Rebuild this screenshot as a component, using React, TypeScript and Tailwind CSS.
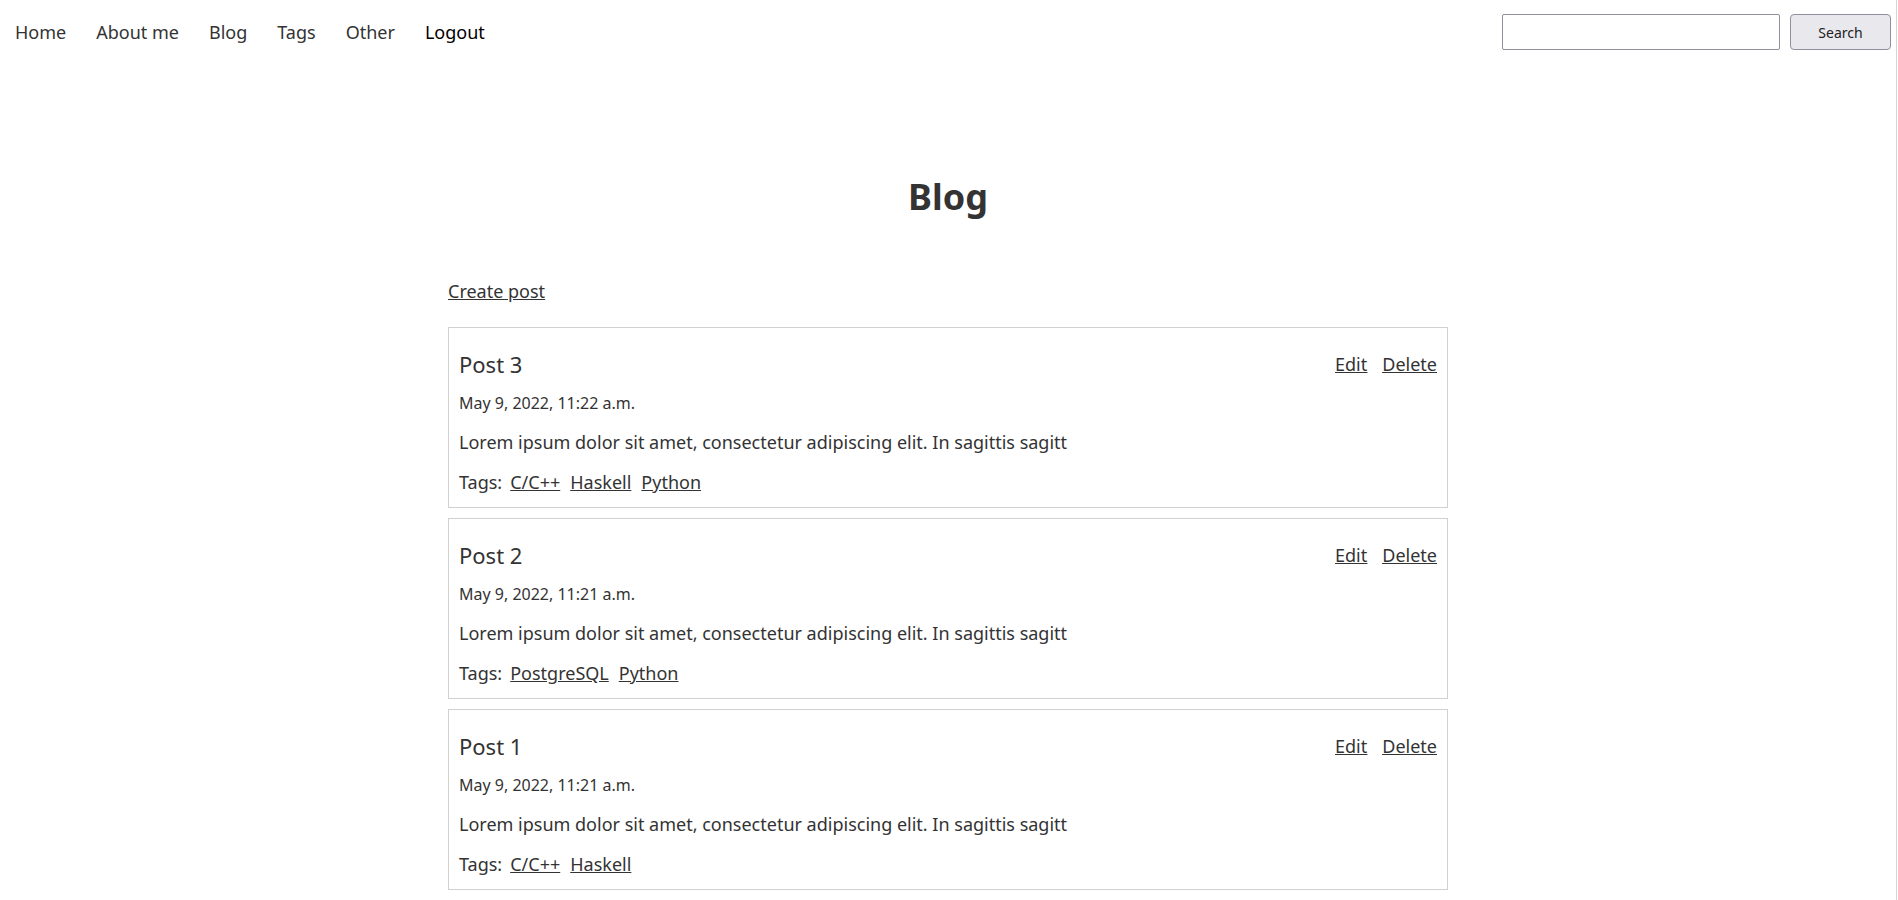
import React from "react";

type Post = {
  id: number;
  title: string;
  date: string;
  body: string;
  tags: string[];
};

const posts: Post[] = [
  {
    id: 3,
    title: "Post 3",
    date: "May 9, 2022, 11:22 a.m.",
    body: "Lorem ipsum dolor sit amet, consectetur adipiscing elit. In sagittis sagitt",
    tags: ["C/C++", "Haskell", "Python"],
  },
  {
    id: 2,
    title: "Post 2",
    date: "May 9, 2022, 11:21 a.m.",
    body: "Lorem ipsum dolor sit amet, consectetur adipiscing elit. In sagittis sagitt",
    tags: ["PostgreSQL", "Python"],
  },
  {
    id: 1,
    title: "Post 1",
    date: "May 9, 2022, 11:21 a.m.",
    body: "Lorem ipsum dolor sit amet, consectetur adipiscing elit. In sagittis sagitt",
    tags: ["C/C++", "Haskell"],
  },
];

const navLinks = ["Home", "About me", "Blog", "Tags", "Other"];

const App = () => {
  return (
    <div className="min-h-screen w-[1897px] border-r border-[#d4d4d4] bg-white text-[#333] font-['Noto_Sans',sans-serif]">
      <nav className="flex h-[64px] items-center justify-between">
        <ul className="flex items-center text-[18px]">
          {navLinks.map((link) => (
            <li key={link}>
              <a href="#" className="px-[15px]">
                {link}
              </a>
            </li>
          ))}
          <li>
            <a href="#" className="px-[15px] text-black">
              Logout
            </a>
          </li>
        </ul>
        <form className="mr-[5px] flex items-center gap-[10px]">
          <input
            type="text"
            className="h-[36px] w-[278px] rounded-[2px] border border-[#8f8f9d] bg-white px-2"
          />
          <button
            type="button"
            className="h-[36px] w-[101px] rounded-[4px] border border-[#8f8f9d] bg-[#e9e9ed] text-[14px] text-[#222]"
          >
            Search
          </button>
        </form>
      </nav>

      <main className="mx-auto w-[1000px]">
        <h1 className="mt-[109px] text-center text-[36px] leading-[48px] font-bold">Blog</h1>
        <a href="#" className="mt-[57px] block w-fit text-[18px] leading-[27px] underline">
          Create post
        </a>

        <div className="mt-[22px] flex flex-col gap-[10px]">
          {posts.map((post) => (
            <article key={post.id} className="border border-[#d0d0d0] px-[10px] pt-[21px] pb-[11px]">
              <div className="flex h-[30px] items-center justify-between">
                <h2 className="text-[22px] leading-[30px]">{post.title}</h2>
                <div className="flex gap-[15px] text-[18px] underline">
                  <a href="#">Edit</a>
                  <a href="#">Delete</a>
                </div>
              </div>
              <p className="mt-[12px] text-[16px] leading-[24px]">{post.date}</p>
              <p className="mt-[14px] text-[18px] leading-[27px]">{post.body}</p>
              <p className="mt-[13px] flex gap-[10px] text-[18px] leading-[27px]">
                <span className="mr-[-2px]">Tags:</span>
                {post.tags.map((tag) => (
                  <a key={tag} href="#" className="underline">
                    {tag}
                  </a>
                ))}
              </p>
            </article>
          ))}
        </div>
      </main>
    </div>
  );
};

export default App;
